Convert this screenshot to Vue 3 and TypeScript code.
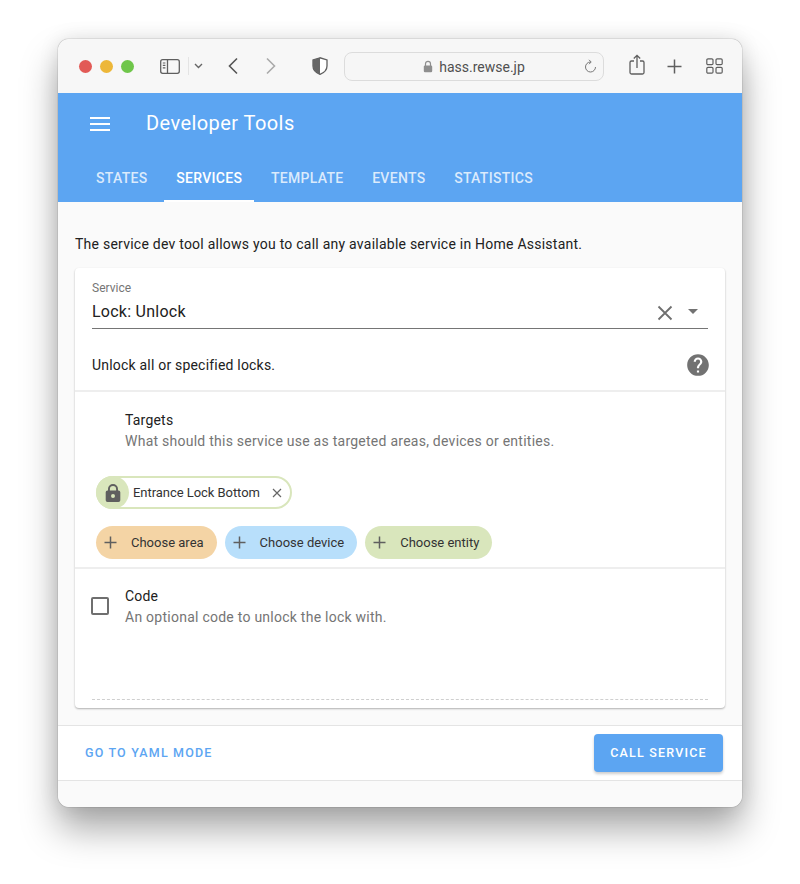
<script setup lang="ts">
const tabs: string[] = ['STATES', 'SERVICES', 'TEMPLATE', 'EVENTS', 'STATISTICS']
const choices = [
  { label: 'Choose area', cls: 'area' },
  { label: 'Choose device', cls: 'device' },
  { label: 'Choose entity', cls: 'entity' },
]
</script>

<template>
  <div class="stage">
    <div class="window">
      <div class="titlebar">
        <div class="lights">
          <span class="light red"></span>
          <span class="light yellow"></span>
          <span class="light green"></span>
        </div>
        <svg class="sidebar-icon" width="22" height="17" viewBox="0 0 22 17" fill="none" stroke="#5f5f5f">
          <rect x="1.7" y="1.7" width="18.6" height="13.6" rx="2" stroke-width="1.3" />
          <path d="M8.5 2v13" stroke-width="1.3" />
          <path d="M3.8 5h2.6M3.8 7.4h2.6M3.8 9.8h2.6" stroke-width="1.2" />
        </svg>
        <span class="vsep"></span>
        <svg class="chev" width="9" height="6" viewBox="0 0 9 6" fill="none" stroke="#666" stroke-width="1.4">
          <path d="M1 1l3.5 3.5L8 1" />
        </svg>
        <svg class="back" width="12" height="18" viewBox="0 0 12 18" fill="none" stroke="#555" stroke-width="1.6">
          <path d="M10 1.5L2.5 9l7.5 7.5" />
        </svg>
        <svg class="forward" width="12" height="18" viewBox="0 0 12 18" fill="none" stroke="#aaa" stroke-width="1.6">
          <path d="M2 1.5L9.5 9 2 16.5" />
        </svg>
        <svg class="shield" width="16" height="18" viewBox="0 0 16 18">
          <path d="M8 .8L1 3v6c0 4 3 6.800 7 8.300 4-1.500 7-4.300 7-8.300V3z" fill="#fff" stroke="#5e5e5e" stroke-width="1.300" />
          <path d="M8 .8L1 3v6c0 4 3 6.800 7 8.300z" fill="#666" />
        </svg>
        <div class="address">
          <span class="addr-center">
            <svg width="10" height="13" viewBox="0 0 10 13">
              <path d="M2.500 6V3.800a2.500 2.500 0 015 0V6" fill="none" stroke="#8e8e8e" stroke-width="1.200" />
              <rect x=".8" y="5.500" width="8.400" height="6.700" rx="1.200" fill="#8e8e8e" />
            </svg>
            <span class="host">hass.rewse.jp</span>
          </span>
          <svg class="reload" width="13" height="15" viewBox="0 0 13 15" fill="none" stroke="#777" stroke-width="1">
            <path d="M6.500 3a5 5 0 105 5" />
            <path d="M5 .8L7.200 3 5 5.200" />
          </svg>
        </div>
        <svg class="share" width="16" height="22" viewBox="0 0 16 22" fill="none" stroke="#5f5f5f" stroke-width="1.300">
          <path d="M5 7H2.500A1.500 1.500 0 001 8.500v10A1.500 1.500 0 002.500 20h11a1.500 1.500 0 001.500-1.500v-10A1.500 1.500 0 0013.500 7H11" />
          <path d="M8 14V1.500M4.800 4.500L8 1.300l3.200 3.200" />
        </svg>
        <svg class="plus" width="15" height="15" viewBox="0 0 15 15" fill="none" stroke="#5f5f5f" stroke-width="1.500">
          <path d="M7.500 .5v14M.5 7.500h14" />
        </svg>
        <svg class="tabs-icon" width="17" height="16" viewBox="0 0 17 16" fill="none" stroke="#5f5f5f" stroke-width="1.200">
          <rect x=".8" y=".8" width="6.200" height="5.900" rx="1.200" />
          <rect x="10" y=".8" width="6.200" height="5.900" rx="1.200" />
          <rect x=".8" y="9.300" width="6.200" height="5.900" rx="1.200" />
          <rect x="10" y="9.300" width="6.200" height="5.900" rx="1.200" />
        </svg>
      </div>

      <header class="app-header">
        <div class="toolbar">
          <svg class="menu" width="20" height="14" viewBox="0 0 20 14" fill="#fff">
            <rect y="0" width="20" height="2" />
            <rect y="6" width="20" height="2" />
            <rect y="12" width="20" height="2" />
          </svg>
          <span class="title">Developer Tools</span>
        </div>
        <nav class="tabs">
          <span v-for="tab in tabs" :key="tab" class="tab" :class="{ active: tab === 'SERVICES' }">{{ tab }}</span>
        </nav>
      </header>

      <main class="content">
        <p class="intro">The service dev tool allows you to call any available service in Home Assistant.</p>
        <section class="card">
          <div class="service-field">
            <div class="field-text">
              <span class="field-label">Service</span>
              <span class="field-value">Lock: Unlock</span>
            </div>
            <svg class="clear" width="16" height="16" viewBox="0 0 16 16" fill="none" stroke="#6f6f6f" stroke-width="1.800">
              <path d="M1.500 1.500l13 13M14.500 1.500l-13 13" />
            </svg>
            <svg class="caret" width="10" height="5" viewBox="0 0 10 5" fill="#727272">
              <path d="M0 0h10L5 5z" />
            </svg>
          </div>

          <div class="description">
            <span>Unlock all or specified locks.</span>
            <svg width="26" height="26" viewBox="0 0 24 24" fill="#727272">
              <path d="M15.070 11.250l-.9.920C13.450 12.900 13 13.500 13 15h-2v-.5c0-1.110.45-2.110 1.170-2.830l1.240-1.260c.37-.36.590-.86.590-1.410a2 2 0 00-2-2 2 2 0 00-2 2H8a4 4 0 014-4 4 4 0 014 4c0 .88-.36 1.670-.93 2.250M13 19h-2v-2h2M12 2A10 10 0 002 12a10 10 0 0010 10 10 10 0 0010-10c0-5.530-4.500-10-10-10z" />
            </svg>
          </div>

          <div class="targets">
            <div class="row-text">
              <span class="row-title">Targets</span>
              <span class="row-sub">What should this service use as targeted areas, devices or entities.</span>
            </div>
            <div class="selected-chip">
              <span class="chip-icon">
                <svg width="18" height="20" viewBox="0 0 18 20" fill="#5f5f5f">
                  <path d="M9 1a5 5 0 00-5 5v1.500H3.500A1.800 1.800 0 001.700 9.300v7.900A1.800 1.800 0 003.500 19h11a1.800 1.800 0 001.800-1.800V9.300a1.800 1.800 0 00-1.800-1.800H14V6a5 5 0 00-5-5zm0 1.900A3.100 3.100 0 0112.100 6v1.500H5.900V6A3.100 3.100 0 019 2.900zm0 8a2 2 0 110 4 2 2 0 010-4z" />
                </svg>
              </span>
              <span class="chip-label">Entrance Lock Bottom</span>
              <svg class="chip-close" width="10" height="10" viewBox="0 0 10 10" fill="none" stroke="#666" stroke-width="1.200">
                <path d="M1 1l8 8M9 1L1 9" />
              </svg>
            </div>
            <div class="choices">
              <span v-for="c in choices" :key="c.cls" class="choice" :class="c.cls">
                <svg width="13" height="13" viewBox="0 0 13 13" fill="none" stroke="#5f5f5f" stroke-width="1.500">
                  <path d="M6.500 .5v12M.5 6.500h12" />
                </svg>
                <span>{{ c.label }}</span>
              </span>
            </div>
          </div>

          <div class="code">
            <span class="checkbox"></span>
            <div class="row-text">
              <span class="row-title">Code</span>
              <span class="row-sub">An optional code to unlock the lock with.</span>
            </div>
          </div>
          <div class="dashed"></div>
        </section>
      </main>

      <footer class="actions">
        <span class="yaml">GO TO YAML MODE</span>
        <span class="call">CALL SERVICE</span>
      </footer>
      <div class="bottom-strip"></div>
    </div>
  </div>
</template>

<style scoped>
.stage {
  width: 800px;
  height: 884px;
  padding: 39px 58px 0 58px;
  box-sizing: border-box;
  background: #fff;
  overflow: hidden;
  font-family: Roboto, "Liberation Sans", sans-serif;
}
.window {
  width: 684px;
  height: 768px;
  box-sizing: border-box;
  display: flex;
  flex-direction: column;
  border-radius: 11px;
  overflow: hidden;
  background: #fafafa;
  box-shadow: 0 0 1px rgba(0, 0, 0, .7), 0 22px 36px rgba(0, 0, 0, .34), 0 0 20px rgba(0, 0, 0, .1);
}
.titlebar {
  height: 54px;
  flex: none;
  display: flex;
  align-items: center;
  background: #f7f7f7;
  padding-left: 21px;
  box-sizing: border-box;
}
.lights { display: flex; gap: 8px; }
.light { width: 13px; height: 13px; border-radius: 50%; }
.red { background: #e25a56; }
.yellow { background: #edb739; }
.green { background: #6fc64a; }
.sidebar-icon { margin-left: 25px; }
.vsep { width: 1px; height: 18px; background: #e4e4e4; margin-left: 7px; }
.chev { margin-left: 5px; }
.back { margin-left: 24px; }
.forward { margin-left: 26px; }
.shield { margin-left: 35px; }
.address {
  position: relative;
  width: 260px;
  height: 29px;
  margin-left: 16px;
  box-sizing: border-box;
  border: 1px solid #dcdcdc;
  border-radius: 8px;
  background: #f6f6f6;
  display: flex;
  align-items: center;
  justify-content: center;
}
.addr-center { display: flex; align-items: center; gap: 6px; }
.host { font-size: 14px; color: #505050; padding-top: 1px; }
.reload { position: absolute; right: 6px; top: 6px; }
.share { margin-left: 25px; margin-top: -3px; }
.plus { margin-left: 22px; }
.tabs-icon { margin-left: 24px; }

.app-header { background: #5ca5f2; flex: none; height: 109px; display: flex; flex-direction: column; }
.toolbar { height: 61px; display: flex; align-items: center; padding-left: 32px; color: #fff; }
.title { font-size: 20px; margin-left: 36px; margin-top: -2px; letter-spacing: .43px; }
.tabs { height: 48px; display: flex; padding-left: 26px; }
.tab {
  padding: 0 12px;
  margin-right: 4.700px;
  display: flex;
  align-items: center;
  font-size: 14px;
  font-weight: 500;
  letter-spacing: .3px;
  color: rgba(255, 255, 255, .78);
  box-sizing: border-box;
  border-bottom: 2px solid transparent;
  padding-top: 2px;
}
.tab.active { color: #fff; border-bottom-color: #fff; }

.content { flex: none; padding: 32px 17px 0; height: 523px; box-sizing: border-box; }
.intro { margin: 0; font-size: 14px; line-height: 20px; color: #212121; letter-spacing: .24px; height: 34px; }
.card {
  height: 440px;
  box-sizing: border-box;
  background: #fff;
  border-radius: 4px;
  box-shadow: 0 1px 2px rgba(0, 0, 0, .3);
  display: flex;
  flex-direction: column;
}
.service-field {
  height: 61px;
  flex: none;
  margin: 0 17px;
  box-sizing: border-box;
  border-bottom: 1px solid #757575;
  display: flex;
  align-items: flex-end;
  padding-bottom: 6px;
}
.field-text { flex: 1; display: flex; flex-direction: column; }
.field-label { font-size: 12px; color: #757575; line-height: 14px; margin-bottom: 7px; }
.field-value { font-size: 16px; line-height: 20px; color: #212121; letter-spacing: .25px; }
.clear { margin-bottom: 1px; margin-right: 15px; }
.caret { margin-bottom: 8px; margin-right: 10px; }

.description {
  height: 63px;
  flex: none;
  box-sizing: border-box;
  padding: 10px 14px 0 17px;
  border-bottom: 2px solid #eeeeee;
  display: flex;
  align-items: center;
  justify-content: space-between;
  font-size: 14px;
  color: #212121;
  letter-spacing: .2px;
}
.targets {
  height: 177px;
  flex: none;
  box-sizing: border-box;
  padding: 19px 0 0 21px;
  border-bottom: 2px solid #eeeeee;
}
.row-text { display: flex; flex-direction: column; }
.targets .row-text { padding-left: 29px; }
.row-title { font-size: 14px; line-height: 19px; color: #212121; letter-spacing: .2px; }
.row-sub { font-size: 14px; line-height: 20px; color: #757575; letter-spacing: .25px; margin-top: 1px; }

.selected-chip {
  margin-top: 25px;
  width: 196px;
  height: 33px;
  box-sizing: border-box;
  border: 2px solid #d9e6bc;
  border-radius: 17px;
  display: flex;
  align-items: center;
  position: relative;
}
.chip-icon {
  width: 33px;
  height: 33px;
  margin: 0 0 0 -2px;
  border-radius: 50%;
  background: #d9e6bc;
  display: flex;
  align-items: center;
  justify-content: center;
  flex: none;
}
.chip-label { font-size: 13px; color: #333; margin-left: 4px; white-space: nowrap; letter-spacing: -.05px; }
.chip-close { margin-left: 12.500px; }

.choices { display: flex; gap: 8px; margin-top: 17px; }
.choice {
  height: 33px;
  border-radius: 17px;
  display: flex;
  align-items: center;
  font-size: 13px;
  color: #333;
  box-sizing: border-box;
  padding: 0 13px 0 8px;
}
.choice svg { margin-right: 14px; }
.area { background: #f4d4a5; }
.device { background: #b8dffb; }
.entity { background: #d9e6bc; }

.code {
  flex: 1;
  display: flex;
  box-sizing: border-box;
  padding: 18px 0 0 16px;
  gap: 16px;
}
.checkbox {
  width: 18px;
  height: 18px;
  margin-top: 10px;
  box-sizing: border-box;
  border: 2px solid #6f6f6f;
  border-radius: 2px;
  flex: none;
}
.dashed { margin: 0 17px 8px; border-top: 1px dashed #cfcfcf; }

.actions {
  height: 56px;
  flex: none;
  box-sizing: border-box;
  background: #fff;
  border-top: 1px solid #e4e4e4;
  border-bottom: 1px solid #e4e4e4;
  display: flex;
  align-items: center;
  justify-content: space-between;
  padding: 0 19px 0 27px;
  font-size: 12.500px;
  font-weight: 500;
  letter-spacing: 1.180px;
}
.yaml { color: #5ca5f2; padding-bottom: 1px; }
.call {
  background: #5ca5f2;
  color: #fff;
  width: 129px;
  height: 38px;
  box-sizing: border-box;
  padding-bottom: 1px;
  border-radius: 4px;
  display: flex;
  align-items: center;
  justify-content: center;
  box-shadow: 0 2px 3px rgba(0, 0, 0, .2);
}
.bottom-strip { flex: 1; background: #fafafa; }
</style>
